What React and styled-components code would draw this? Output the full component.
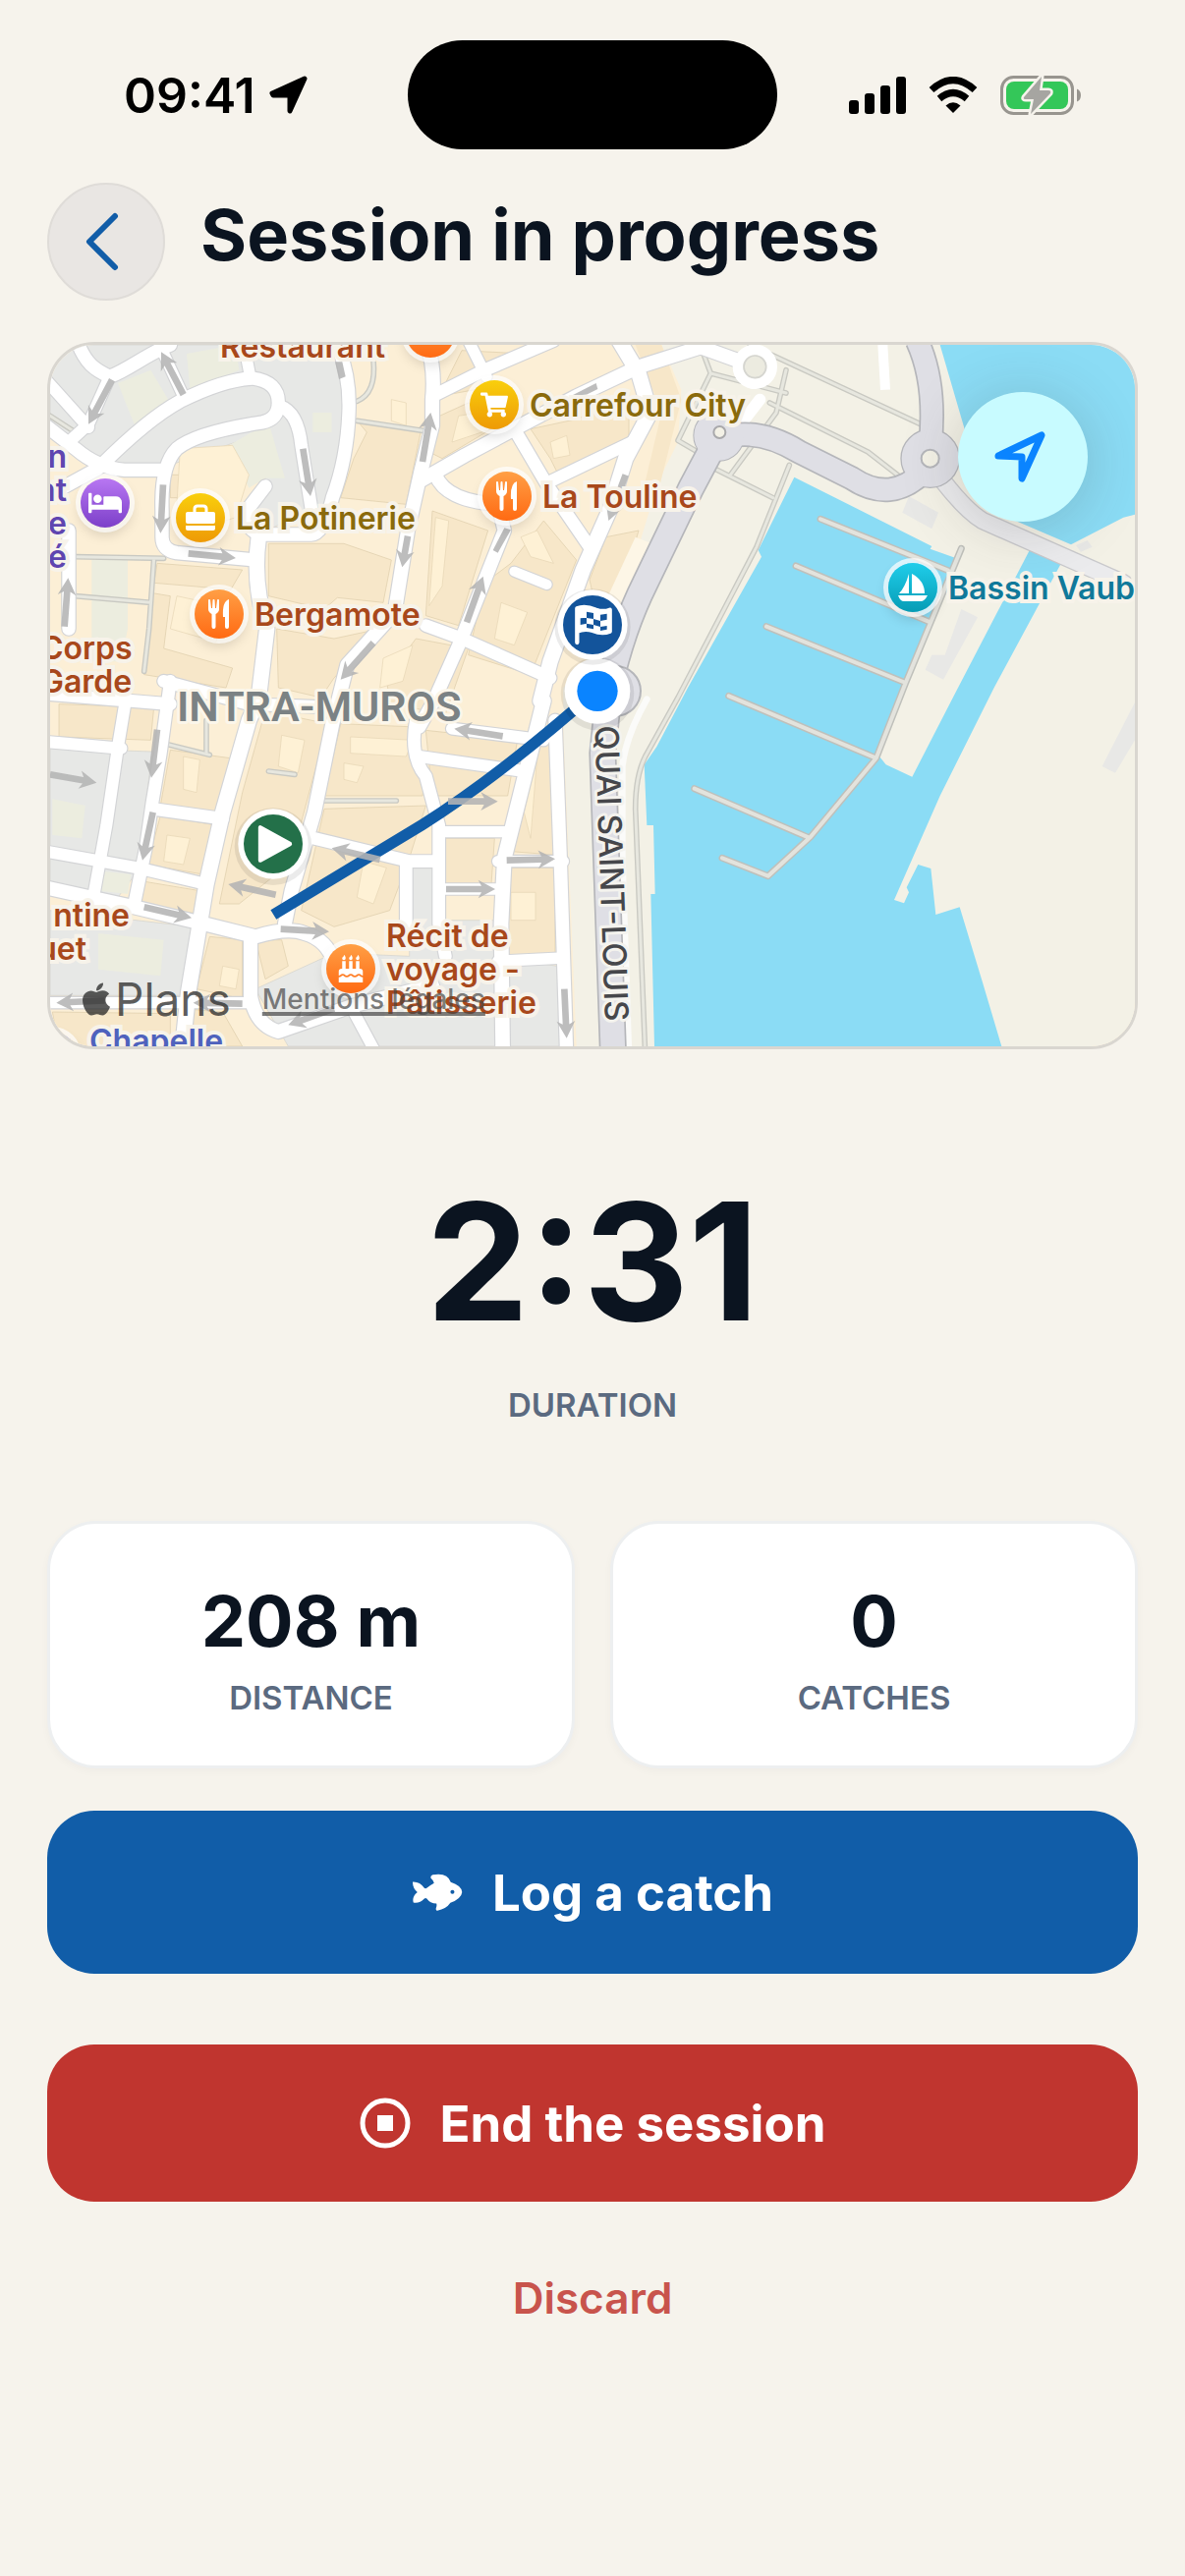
import React from "react";
import styled, { createGlobalStyle } from "styled-components";
import {
  FaApple,
  FaBed,
  FaBirthdayCake,
  FaShoppingCart,
  FaUtensils,
} from "react-icons/fa";

const COLORS = {
  page: "#f6f3ec",
  ink: "#0b1420",
  muted: "#5b6a80",
  blue: "#115da8",
  red: "#c0352f",
  water: "#8bdcf5",
};

// Size of the map surface, pins are placed in these units
const MAP_W = 1104;
const MAP_H = 714;

const GREY_BLOCKS = [
  "M33 33H925L945 180L925 420L860 530L690 600L640 560L690 440L600 330L400 400H180L33 300Z",
  "M33 1265L345 1275L300 1640L240 1720L33 1680Z",
  "M33 1760L470 1810L430 2020L33 2020Z",
  "M1130 1630L1215 1630L1225 1790L1390 1790L1400 1900L1580 1930L1600 2175H760L660 2000L900 1890L1130 1900Z",
];

const GREEN_BLOCKS = [
  "M240 150L340 110L400 210L300 300Z",
  "M580 340L700 270L750 440L690 440L640 470Z",
  "M450 60L600 33L610 110L460 170Z",
  "M160 690H270V900L250 1000H160Z",
  "M40 1420L140 1440L130 1540L40 1530Z",
  "M180 1830L380 1850L370 1960L180 1940Z",
  "M190 1640L280 1650L270 1710L185 1700Z",
  "M835 240H893V300H835Z",
];

const DARK_BLOCKS = [
  "M360 700L620 720L585 780L350 760Z",
  "M400 430H465L455 500H400Z",
  "M700 640L930 640L1075 690L1050 820L910 805L870 840L700 800Z",
  "M975 270L1165 295L1120 520L920 500L960 380L1000 300Z",
  "M340 790L400 800L380 960L590 1020L570 1080L320 1040Z",
  "M725 900L900 930L1040 900L900 1050L860 1110L730 1080Z",
  "M1060 1050L1150 930L1310 960L1240 1160L1070 1130Z",
  "M1290 50L1480 60L1380 120L1330 170L1220 190Z",
  "M1200 260L1310 210L1430 260L1230 380L1190 360Z",
  "M1500 290L1640 260L1800 190L1800 330L1580 420L1560 380Z",
  "M1200 540L1370 600L1280 890L1180 860Z",
  "M1440 700L1540 570L1640 690L1560 890L1500 1040L1310 980L1360 760Z",
  "M1730 620L1830 600L1780 770L1700 840L1680 750Z",
  "M400 1270L620 1300L550 1460L370 1440Z",
  "M370 1470L540 1500L500 1650L330 1620Z",
  "M310 1670L490 1700L480 1770L300 1740Z",
  "M690 1150L880 1190L800 1490L760 1620L610 1740L550 1740L620 1400Z",
  "M920 1190L1150 1200L1180 1340L1170 1410L870 1410Z",
  "M870 1450L1180 1440L1130 1600L1070 1760L900 1810L800 1760Z",
  "M520 1840L620 1850L620 2030L480 2000Z",
  "M660 1850L740 1850L760 1930L690 1970Z",
  "M1240 1540H1390L1380 1680H1240Z",
  "M1480 1260L1560 1240L1570 1590L1440 1580Z",
  "M1435 1630L1575 1630V1900L1420 1910Z",
  "M1180 1210L1460 1240L1430 1410L1200 1410Z",
  "M60 1130L350 1140L340 1240L60 1230Z",
  "M440 2060L560 2070L620 2175H440Z",
  "M40 2070L400 2075L400 2175H60Z",
];

const LIGHT_BLOCKS = [
  "M430 350L590 340L640 430L600 560L470 600L420 520Z",
  "M1075 200L1120 210L1120 280L1075 265Z",
  "M1050 990L1140 950L1110 1060L1040 1080Z",
  "M420 800L560 830L540 940L400 900Z",
  "M1280 250L1340 240L1380 290L1260 330Z",
  "M1560 330L1610 310L1620 370L1570 380Z",
  "M1410 820L1490 850L1450 950L1390 930Z",
  "M1470 620L1520 600L1570 700L1500 680Z",
  "M1210 560L1250 570L1230 770L1190 830Z",
  "M740 1225L810 1240L790 1340L730 1320Z",
  "M950 1230L1140 1240L1120 1290L950 1280Z",
  "M930 1310L990 1320L970 1370L930 1360Z",
  "M390 1530L460 1540L440 1620L380 1610Z",
  "M440 1290L490 1300L480 1400L440 1390Z",
  "M990 1610L1060 1630L1020 1740L970 1720Z",
  "M560 1930L610 1940L600 2000L550 1990Z",
  "M1440 1705H1515V1790H1440Z",
  "M1480 1460L1520 1290L1500 1540Z",
];

const ROADS = [
  ["M115 20C140 90 170 110 215 130C270 110 330 60 400 33", 40],
  ["M215 130L150 275L90 330", 36],
  ["M20 140L150 285", 36],
  ["M20 280L110 350Q180 410 260 415H380", 40],
  ["M33 490L180 410", 40],
  ["M375 50L440 190", 34],
  ["M190 400Q330 260 430 205Q560 140 650 135Q730 145 730 210Q730 260 680 270Q480 300 420 350Q370 400 375 540V620Q375 660 420 668L660 690", 40],
  ["M735 220Q790 240 800 340L835 560", 38],
  ["M625 33L645 135", 34],
  ["M910 33Q950 130 945 240Q940 380 895 500Q870 610 830 612H680Q620 600 640 530L690 465", 40],
  ["M670 620Q650 760 695 900L670 1110L640 1180L560 1460L510 1680L455 2010L435 2200", 46],
  ["M1180 20Q1210 100 1200 200V280L1165 420L1125 600L1085 850L940 1010L895 1190L840 1460L770 1700L750 1800", 42],
  ["M1200 190L1360 110L1570 20", 38],
  ["M1310 20L1365 130", 34],
  ["M1160 450L1300 370L1450 290L1640 190L1830 100L2020 40L2130 80", 42],
  ["M1770 20L1830 120L1865 240L1790 380L1740 540L1660 720L1610 860L1560 1000L1530 1120", 46],
  ["M1450 290L1550 460L1680 650", 38],
  ["M1560 450L1810 330", 36],
  ["M1210 430Q1240 510 1400 520L1420 600L1285 940L1205 1120L1160 1200", 40],
  ["M1180 890L1290 930L1560 1050", 38],
  ["M1450 725L1550 765", 30],
  ["M90 600V900", 40],
  ["M20 1245L250 1265", 36],
  ["M33 1100L400 1130", 38],
  ["M380 1060L640 1130L900 1140", 38],
  ["M265 1110L240 1260L205 1500L165 1720", 36],
  ["M400 1060L370 1280L345 1430L325 1570L290 1740", 38],
  ["M345 1450L560 1480", 38],
  ["M20 1580L300 1630L510 1680", 36],
  ["M20 1690L290 1750L500 1800L660 1840Q760 1810 810 1830Q880 1850 900 1920", 42],
  ["M645 1840V2020Q660 2110 730 2130L960 2050L1200 1990", 42],
  ["M20 2042H640", 34],
  ["M840 1540L1130 1610H1210", 38],
  ["M1120 1620V1860", 38],
  ["M960 2070L1030 2200", 34],
  ["M1160 1290L1480 1335", 36],
  ["M1150 1180Q1130 1290 1180 1350L1220 1500V1800L1240 1900", 38],
  ["M1540 1120L1500 1280L1420 1600L1410 1800L1415 2200", 44],
  ["M1260 1205L1540 1240", 36],
  ["M1220 1520H1440", 34],
  ["M1400 1610H1600", 34],
  ["M1220 1695H1400", 34],
  ["M1400 1915L1600 1905", 34],
  ["M1575 1180L1590 1580L1610 2200", 40],
];

const FOOTPATHS = [
  "M33 250L110 300",
  "M110 680L380 685M350 685L335 900L320 1030M110 800L340 820",
  "M970 265L1170 295M970 205Q1030 180 1020 80",
  "M380 1250L520 1285M510 1180V1280M700 1335L780 1345",
  "M870 1425H1090",
  "M2020 40L2050 120L1950 325L2010 360M2050 120L2280 180M2170 33L2690 275M2280 110L2250 240L2110 430M2060 410L2240 500M2230 210L2530 360L2620 430",
  "M2290 400L2190 650L1950 1110L1850 1290Q1820 1350 1820 1450L1850 2200",
];

const PIERS =
  "M2385 565L2775 722M2310 708L2720 880M2220 893L2645 1065M2105 1105L2555 1295M2000 1388L2350 1538M2085 1600L2225 1655L2355 1535L2555 1295L2645 1065L2815 655";

const ARROWS = [
  [222, 140, 150, 275],
  [440, 185, 372, 55],
  [378, 460, 370, 608],
  [455, 670, 600, 684],
  [805, 350, 828, 495],
  [77, 893, 88, 745],
  [1125, 617, 1108, 712],
  [1020, 943, 920, 1055],
  [1170, 390, 1195, 240],
  [1305, 880, 1355, 740],
  [1790, 430, 1738, 570],
  [360, 1208, 342, 1355],
  [33, 1345, 175, 1370],
  [347, 1460, 315, 1607],
  [722, 1712, 577, 1680],
  [320, 1750, 465, 1783],
  [737, 1817, 885, 1825],
  [1040, 1605, 893, 1570],
  [620, 2045, 470, 2042],
  [200, 2035, 52, 2042],
  [900, 2060, 760, 2110],
  [1415, 1228, 1267, 1205],
  [1248, 1427, 1400, 1427],
  [1427, 1607, 1575, 1603],
  [1242, 1695, 1392, 1695],
  [1603, 2000, 1610, 2150],
];

const SuitcaseIcon = () => (
  <svg viewBox="0 0 32 28" width="32" height="28" aria-hidden="true">
    <path d="M10 8V5Q10 2 13 2H19Q22 2 22 5V8" fill="none" stroke="#fff" strokeWidth="3" />
    <rect x="1" y="8" width="30" height="12" rx="2" fill="#fff" />
    <path d="M1 22H31V25Q31 27 29 27H3Q1 27 1 25Z" fill="#fff" />
  </svg>
);

const SailboatIcon = () => (
  <svg viewBox="0 0 30 30" width="30" height="30" aria-hidden="true">
    <path d="M11 1V21H1Q7 15 11 1Z" fill="#fff" />
    <path d="M14 1Q27 8 27 21H14Z" fill="#fff" />
    <path d="M0 23H30Q27 29 23 29H6Q2 29 0 23Z" fill="#fff" />
  </svg>
);

const CutleryIcon = () => (
  <svg viewBox="0 0 24 32" width="24" height="32" aria-hidden="true">
    <path
      d="M1 2Q1 1 2 1T3 2L4 10H5L5.500 2Q5.500 1 6.500 1T7.500 2L8 10H9L10 2Q10 1 11 1T12 2V11Q12 14 8.500 16V29Q8.500 31 6.500 31T4.500 29V16Q1 14 1 11Z"
      fill="#fff"
    />
    <path d="M22 1V29Q22 31 20 31T18 29V19H16Q15 3 22 1Z" fill="#fff" />
  </svg>
);

const POIS = [
  { x: 387, y: -12, tone: "orange" },
  { x: 56, y: 161, tone: "purple", icon: <FaBed size={34} /> },
  { x: 153, y: 176, tone: "yellow", icon: <SuitcaseIcon />, lines: ["La Potinerie"] },
  { x: 172, y: 274, tone: "orange", icon: <CutleryIcon />, lines: ["Bergamote"] },
  { x: 452, y: 61, tone: "yellow", icon: <FaShoppingCart />, lines: ["Carrefour City"] },
  { x: 465, y: 154, tone: "orange", icon: <CutleryIcon />, lines: ["La Touline"] },
  { x: 878, y: 247, tone: "teal", icon: <SailboatIcon />, lines: ["Bassin Vauban"] },
  {
    x: 306,
    y: 635,
    tone: "orange",
    icon: <FaBirthdayCake />,
    lines: ["Récit de", "voyage -", "Pâtisserie"],
  },
  { x: 2, y: 724, tone: "indigo" },
];

const LOOSE_LABELS = [
  { x: 173, y: -17, color: "#a8481b", lines: ["Restaurant"] },
  { x: 17, y: 95, end: true, color: "#5f45b0", lines: ["n", "nt", "e", "é"] },
  { x: -10, y: 290, color: "#a8481b", lines: ["Corps", "Garde"] },
  { x: 81, y: 562, end: true, color: "#a8481b", lines: ["ntine"] },
  { x: 37, y: 596, end: true, color: "#a8481b", lines: ["uet"] },
  { x: 40, y: 690, color: "#4f62bd", lines: ["Chapelle"] },
];

const TONES = {
  orange: { fill: "linear-gradient(#ff9f45, #ff6a13)", text: "#a8481b" },
  yellow: { fill: "linear-gradient(#f9cf0c, #ee9a06)", text: "#8a6a0c" },
  purple: { fill: "linear-gradient(#b877f2, #7c3fc9)", text: "#5f45b0" },
  teal: { fill: "linear-gradient(#1fcdea, #069cb5)", text: "#10799a" },
  indigo: { fill: "#5a6fe0", text: "#4f62bd" },
};

const place = (x, y) => ({
  left: `${(x / MAP_W) * 100}%`,
  top: `${(y / MAP_H) * 100}%`,
});

const Arrow = ({ points: [x1, y1, x2, y2] }) => {
  const length = Math.hypot(x2 - x1, y2 - y1);
  const angle = (Math.atan2(y2 - y1, x2 - x1) * 180) / Math.PI;
  return (
    <path
      transform={`translate(${x1} ${y1}) rotate(${angle})`}
      d={`M0 -10H${length - 42}L${length - 52} -28L${length} 0L${length - 52} 28L${length - 42} 10H0Z`}
    />
  );
};

const MapDrawing = () => (
  <MapSvg viewBox="33 33 3312 2142" role="img" aria-label="Route through Intra-Muros">
    <rect x="33" y="33" width="3312" height="2142" fill="#fcefd6" />
    <g fill="#e7e8e6" stroke="#d2d2cc" strokeWidth="2">
      {GREY_BLOCKS.map((d) => (
        <path key={d} d={d} />
      ))}
    </g>
    <g fill="#eceddf">
      {GREEN_BLOCKS.map((d) => (
        <path key={d} d={d} />
      ))}
    </g>
    <g fill="#f7e7c9" stroke="#dccba9" strokeWidth="2">
      {DARK_BLOCKS.map((d) => (
        <path key={d} d={d} />
      ))}
    </g>
    <g fill="#fef1d5" stroke="#e6d5b3" strokeWidth="2">
      {LIGHT_BLOCKS.map((d) => (
        <path key={d} d={d} />
      ))}
    </g>

    {/* east bank */}
    <path
      d="M1900 33L1960 170L1950 330L1890 450L1790 780L1700 960L1600 1080V1200L1640 2175H3345V33Z"
      fill="#f3f1e6"
    />
    <path d="M1820 33H1900L1960 200L1890 480L1850 450L1900 240Z" fill="#f7e7c9" />
    <path d="M1870 640L1820 620L1690 900L1740 890Z" fill="#fdf6e6" />
    <g fill={COLORS.water}>
      <path d="M2750 33L2825 290L2850 480L2980 570L3150 643L3310 560L3345 551V33Z" />
      <path d="M2305 437L2725 648L2720 656L2800 685L2780 740L2715 880L2640 1100L2565 1290L2585 1315L2665 1352L2805 1080L3025 657L3120 700L2915 1080L2750 1410L2610 1728L2640 1738L2655 1705L2648 1690L2683 1620L2722 1632L2737 1773L2810 1750L2880 1980L2938 2175H1878L1867 1710H1880L1875 1500H1855L1847 1315L1885 1260L1980 1080L2205 680L2195 660Z" />
    </g>
    <g fill="#e8e8e6">
      <path d="M2655 495L2745 545L2725 595L2635 545Z" />
      <path d="M2815 840L2865 865L2760 1055L2705 1025L2725 980L2765 980Z" />
      <path d="M3245 1320L3345 1125V1240L3285 1340Z" />
      <path d="M3200 630L3215 650L3180 665L3165 645Z" />
    </g>

    <g fill="none" strokeLinecap="round" strokeLinejoin="round">
      {FOOTPATHS.map((d) => (
        <path key={d} d={d} stroke="#c9c9c2" strokeWidth="17" />
      ))}
      {FOOTPATHS.map((d) => (
        <path key={d} d={d} stroke="#e7e7df" strokeWidth="9" />
      ))}
      <path d={PIERS} stroke="#bfc0bb" strokeWidth="21" />
      <path d={PIERS} stroke="#e3e3dd" strokeWidth="12" />
      {ROADS.map(([d, w]) => (
        <path key={d} d={d} stroke="#d3d4d6" strokeWidth={w + 7} />
      ))}
      {ROADS.map(([d, w]) => (
        <path key={d} d={d} stroke="#fff" strokeWidth={w} />
      ))}
      <path d="M1855 1115Q1790 1230 1780 1320V1600L1800 2200" stroke="#fbfbf9" strokeWidth="20" />
      <path d="M2575 33L2583 170" stroke="#fff" strokeWidth="30" strokeLinecap="butt" />
      <path d="M2200 200L2130 290" stroke="#fff" strokeWidth="36" />
      <path d="M2760 450Q2830 540 2880 570L3310 760" stroke="#c9c9cc" strokeWidth="56" />
      <path d="M2760 450Q2830 540 2880 570L3310 760" stroke="#ebebed" strokeWidth="48" />
    </g>
    <circle cx="2185" cy="100" r="52" fill="#f3f1e6" stroke="#fff" strokeWidth="32" />
    <circle cx="2185" cy="100" r="34" fill="#ecebe0" stroke="#d5d5d0" strokeWidth="5" />

    {/* quay road, drawn casing first */}
    <g fill="none" stroke="#b5b6ba">
      <path
        d="M2075 310L1990 470L1850 760Q1780 900 1740 1080L1720 1280L1752 2200"
        strokeWidth="84"
      />
      <path d="M2075 320Q2190 280 2320 360L2480 440Q2600 520 2700 420M2680 20Q2740 150 2720 340" strokeWidth="76" />
      <circle cx="2075" cy="310" r="58" strokeWidth="42" />
      <circle cx="2720" cy="380" r="66" strokeWidth="50" />
    </g>
    <g fill="none" stroke="#dfdfe5">
      <path
        d="M2075 310L1990 470L1850 760Q1780 900 1740 1080L1720 1280L1752 2200"
        strokeWidth="74"
      />
      <path d="M2075 320Q2190 280 2320 360L2480 440Q2600 520 2700 420M2680 20Q2740 150 2720 340" strokeWidth="66" />
      <circle cx="2075" cy="310" r="42" strokeWidth="68" />
      <circle cx="2720" cy="380" r="54" strokeWidth="66" />
    </g>
    <circle cx="1760" cy="1090" r="76" fill="#dfdfe5" stroke="#b5b6ba" strokeWidth="6" />
    <circle cx="2077" cy="300" r="18" fill="#f3f1e6" stroke="#a9a9ab" strokeWidth="6" />
    <circle cx="2720" cy="380" r="27" fill="#f3f1e6" stroke="#b5b6ba" strokeWidth="6" />

    <path
      d="M715 1773L1170 1498Q1380 1365 1630 1150L1700 1090"
      fill="none"
      stroke={COLORS.blue}
      strokeWidth="34"
    />
    <g fill="#b4b4b4" fillOpacity="0.88">
      {ARROWS.map((points) => (
        <Arrow key={points.join()} points={points} />
      ))}
      <path d="M1420 592L1440 598L1400 668L1385 660Z" />
      <path d="M1700 150L1705 168L1640 200L1625 188Z" />
      <path d="M903 85H925L935 130L915 138Z" />
    </g>

    <DistrictName x="420" y="1183">
      INTRA-MUROS
    </DistrictName>
    <StreetName transform="translate(1712 1648) rotate(88)" textAnchor="middle">
      QUAI SAINT-LOUIS
    </StreetName>

    <circle cx="714" cy="1565" r="118" fill="#000" fillOpacity="0.08" />
    <circle cx="714" cy="1557" r="107" fill="#fff" />
    <circle cx="714" cy="1557" r="90" fill="#237049" />
    <path
      d="M675 1507V1607L765 1557Z"
      fill="#fff"
      stroke="#fff"
      strokeWidth="13"
      strokeLinejoin="round"
    />

    <circle cx="1704" cy="1098" r="112" fill="#000" fillOpacity="0.08" />
    <circle cx="1704" cy="1090" r="100" fill="#fff" />
    <circle cx="1704" cy="1090" r="62" fill="#0a84ff" />

    <circle cx="1689" cy="894" r="116" fill="#000" fillOpacity="0.08" />
    <circle cx="1689" cy="888" r="107" fill="#fff" />
    <circle cx="1689" cy="888" r="90" fill="#13549b" />
    <path
      d="M1642 942V838Q1665 828 1700 842Q1722 850 1742 842V908Q1718 918 1690 906Q1665 898 1642 908"
      fill="#fff"
      stroke="#fff"
      strokeWidth="13"
      strokeLinecap="round"
      strokeLinejoin="round"
    />
    <path
      d="M1671 848L1692 852V870L1671 867ZM1713 857L1733 854V872L1713 876ZM1692 870L1713 876V894L1692 888ZM1652 868L1671 866V884L1652 888ZM1671 884L1692 888V901L1671 897ZM1713 894L1733 891V902L1713 906Z"
      fill="#13549b"
    />
  </MapSvg>
);

const StatusIcons = () => (
  <>
    <svg viewBox="0 0 58 38" width="58" height="38" aria-label="Signal">
      <rect x="0" y="24" width="10" height="14" rx="3" />
      <rect x="16" y="17" width="10" height="21" rx="3" />
      <rect x="32" y="9" width="10" height="29" rx="3" />
      <rect x="48" y="0" width="10" height="38" rx="3" />
    </svg>
    <svg viewBox="0 0 50 37" width="50" height="37" aria-label="Wi-Fi">
      <g fill="none" stroke="#000" strokeWidth="7">
        <path d="M3 13.500Q25 -6.500 47 13.500" />
        <path d="M11 22.500Q25 10.500 39 22.500" />
      </g>
      <path d="M17.500 29.500Q25 23 32.500 29.500L25 37Z" />
    </svg>
    <svg viewBox="0 0 82 40" width="82" height="40" aria-label="Charging">
      <rect x="1.500" y="1.500" width="72" height="37" rx="12" fill="none" stroke="#98958f" strokeWidth="3" />
      <rect x="6" y="6" width="63" height="28" rx="8" fill="#34c759" />
      <path d="M78 13.500Q82 15 82 20T78 26.500Z" fill="#98958f" />
      <path
        d="M42 1L24 22Q23 24 26 24H34L31 39L51 18Q52 15 49 15H40Z"
        fill="#a6a5a1"
        stroke={COLORS.page}
        strokeWidth="5"
        paintOrder="stroke"
        strokeLinejoin="round"
      />
    </svg>
  </>
);

const App = () => {
  return (
    <Screen>
      <GlobalStyle />
      <StatusBar>
        <Clock>
          <time>09:41</time>
          <svg viewBox="0 0 40 40" width="40" height="40" aria-hidden="true">
            <path
              d="M3 18L36 3L21 36V20H4Z"
              stroke="#000"
              strokeWidth="5"
              strokeLinejoin="round"
            />
          </svg>
        </Clock>
        <Island />
        <Indicators>
          <StatusIcons />
        </Indicators>
      </StatusBar>

      <Main>
        <Header>
          <BackButton type="button" aria-label="Back">
            <svg viewBox="0 0 36 60" width="36" height="60" aria-hidden="true">
              <path d="M31 4L5 30L31 56" />
            </svg>
          </BackButton>
          <Title>Session in progress</Title>
        </Header>

        <MapCard>
          <MapDrawing />
          {LOOSE_LABELS.map(({ x, y, end, color, lines }) => (
            <LooseLabel key={lines.join()} $color={color} $end={end} style={place(x, y)}>
              {lines.map((line) => (
                <span key={line}>{line}</span>
              ))}
            </LooseLabel>
          ))}
          {POIS.map(({ x, y, tone, icon, lines }) => (
            <Poi key={`${x}-${y}`} style={place(x, y)}>
              <PoiDot $tone={tone}>{icon}</PoiDot>
              {lines && (
                <MapLabel $color={TONES[tone].text}>
                  {lines.map((line) => (
                    <span key={line}>{line}</span>
                  ))}
                </MapLabel>
              )}
            </Poi>
          ))}
          <Credits>
            <Brand>
              <FaApple size={38} />
              Plans
            </Brand>
            <LegalLink href="#legal">Mentions légales</LegalLink>
          </Credits>
          <LocateButton type="button" aria-label="Centre on my position">
            <svg viewBox="0 0 52 52" width="52" height="52" aria-hidden="true">
              <path d="M4 25L48 4L28 48V26Z" />
            </svg>
          </LocateButton>
        </MapCard>

        <Timer>
          <TimerValue>2:31</TimerValue>
          <Caption>DURATION</Caption>
        </Timer>

        <Stats>
          <StatCard>
            <StatValue>208 m</StatValue>
            <Caption>DISTANCE</Caption>
          </StatCard>
          <StatCard>
            <StatValue>0</StatValue>
            <Caption>CATCHES</Caption>
          </StatCard>
        </Stats>

        <Actions>
          <ActionButton type="button" $height={166} $color={COLORS.blue}>
            <svg viewBox="242 214 151 112" width="52" height="38" aria-hidden="true">
              <path
                fill="#fff"
                d="M244 239Q266 238 278 257Q282 261 287 257Q297 249 308 243Q308 236 298 227Q297 220 304 218Q348 210 358 240Q390 250 392 270Q390 289 357 302Q344 321 318 325Q312 325 314 317Q317 310 315 304Q296 303 286 289Q282 286 278 290Q265 304 246 301Q241 284 258 270Q243 257 244 239Z"
              />
              <circle cx="363" cy="269" r="6" fill={COLORS.blue} />
            </svg>
            Log a catch
          </ActionButton>
          <ActionButton type="button" $height={160} $color={COLORS.red}>
            <svg viewBox="0 0 52 52" width="52" height="52" aria-hidden="true">
              <circle cx="26" cy="26" r="23" fill="none" stroke="#fff" strokeWidth="5" />
              <rect x="18" y="18" width="16" height="16" fill="#fff" />
            </svg>
            End the session
          </ActionButton>
          <DiscardButton type="button">Discard</DiscardButton>
        </Actions>
      </Main>
    </Screen>
  );
};

const GlobalStyle = createGlobalStyle`
  * {
    box-sizing: border-box;
  }

  body {
    margin: 0;
    background: ${COLORS.page};
    color: ${COLORS.ink};
    font-family: Inter, "Liberation Sans", sans-serif;
  }

  button {
    padding: 0;
    border: 0;
    font-family: inherit;
    cursor: pointer;
  }

  svg {
    flex-shrink: 0;
  }
`;

const Screen = styled.div`
  min-height: 100vh;
  background: ${COLORS.page};
`;

const StatusBar = styled.div`
  display: grid;
  grid-template-columns: 1fr 376px 1fr;
  align-items: center;
  padding-top: 41px;
`;

const Clock = styled.div`
  display: flex;
  align-items: center;
  gap: 14px;
  padding-left: 126px;
  font-size: 50px;
  font-weight: 600;
  line-height: 60px;
  color: #000;
`;

const Island = styled.div`
  height: 111px;
  border-radius: 56px;
  background: #000;
`;

const Indicators = styled.div`
  display: flex;
  align-items: center;
  justify-content: flex-end;
  gap: 23px;
  padding-right: 106px;
`;

const Main = styled.main`
  display: flex;
  flex-direction: column;
  padding: 34px 48px 48px;
`;

const Header = styled.header`
  display: flex;
  align-items: center;
  gap: 36px;
  margin-bottom: 42px;
`;

const BackButton = styled.button`
  display: flex;
  align-items: center;
  justify-content: center;
  flex-shrink: 0;
  width: 120px;
  height: 120px;
  padding-right: 8px;
  border: 2px solid #dfdcd8;
  border-radius: 50%;
  background: #e9e6e3;

  path {
    fill: none;
    stroke: ${COLORS.blue};
    stroke-width: 6;
    stroke-linecap: round;
    stroke-linejoin: round;
  }
`;

const Title = styled.h1`
  margin: 0;
  padding-bottom: 14px;
  font-size: 72px;
  font-weight: 700;
  line-height: 88px;
`;

const MapCard = styled.section`
  position: relative;
  overflow: hidden;
  aspect-ratio: 1110 / 720;
  border: 3px solid #d9d6d0;
  border-radius: 48px;
`;

const MapSvg = styled.svg`
  display: block;
  width: 100%;
  height: 100%;
`;

const DistrictName = styled.text`
  fill: #7b8284;
  stroke: #fbf6ea;
  stroke-width: 18px;
  stroke-linejoin: round;
  paint-order: stroke;
  font-family: Roboto, sans-serif;
  font-size: 129px;
  font-weight: 600;
`;

const StreetName = styled.text`
  fill: #46474b;
  stroke: #f4f3ee;
  stroke-width: 18px;
  stroke-linejoin: round;
  paint-order: stroke;
  font-family: Inter, sans-serif;
  font-size: 99px;
  font-weight: 500;
`;

const MapLabel = styled.div`
  display: flex;
  flex-direction: column;
  padding-top: 2px;
  color: ${({ $color }) => $color};
  font-size: 32px;
  font-weight: 600;
  line-height: 34px;
  white-space: nowrap;
  -webkit-text-stroke: 8px #f7f3ea;
  paint-order: stroke fill;
`;

const LooseLabel = styled(MapLabel)`
  position: absolute;
  align-items: ${({ $end }) => ($end ? "flex-end" : "flex-start")};
  transform: ${({ $end }) => ($end ? "translateX(-100%)" : "none")};
`;

const Poi = styled.div`
  position: absolute;
  display: flex;
  align-items: center;
  gap: 11px;
  transform: translate(-25px, -50%);
`;

const PoiDot = styled.div`
  display: flex;
  align-items: center;
  justify-content: center;
  flex-shrink: 0;
  width: 50px;
  height: 50px;
  border-radius: 50%;
  background: ${({ $tone }) => TONES[$tone].fill};
  box-shadow: 0 0 0 5px rgba(255, 255, 255, 0.7), 0 6px 14px rgba(0, 0, 0, 0.18);
  color: #fff;
  font-size: 28px;
`;

const Credits = styled.div`
  position: absolute;
  left: 28px;
  bottom: 18px;
  display: flex;
  align-items: center;
  gap: 32px;
`;

const Brand = styled.span`
  display: flex;
  align-items: center;
  font-size: 46px;
  line-height: 60px;
  color: rgba(40, 40, 40, 0.76);
`;

const LegalLink = styled.a`
  color: rgba(70, 70, 70, 0.7);
  font-size: 28px;
  font-weight: 500;
  line-height: 34px;
  text-decoration: underline;
  text-decoration-thickness: 4px;
  text-underline-offset: 3px;
  text-decoration-skip-ink: none;
`;

const LocateButton = styled.button`
  position: absolute;
  top: 48px;
  right: 48px;
  display: flex;
  align-items: center;
  justify-content: center;
  width: 132px;
  height: 132px;
  padding-right: 6px;
  border-radius: 50%;
  background: #c8fbff;
  box-shadow: 0 6px 60px rgba(60, 60, 60, 0.22);

  path {
    fill: none;
    stroke: #0a84ff;
    stroke-width: 7;
    stroke-linejoin: round;
  }
`;

const Timer = styled.section`
  display: flex;
  flex-direction: column;
  align-items: center;
  gap: 42px;
  padding: 132px 0 98px;
`;

const TimerValue = styled.div`
  font-size: 166px;
  font-weight: 700;
  line-height: 168px;
`;

const Caption = styled.div`
  color: ${COLORS.muted};
  font-size: 33px;
  font-weight: 600;
  line-height: 40px;
`;

const Stats = styled.section`
  display: grid;
  grid-template-columns: 1fr 1fr;
  gap: 36px;
  margin-bottom: 43px;
`;

const StatCard = styled.div`
  display: flex;
  flex-direction: column;
  align-items: center;
  gap: 14px;
  padding: 55px 24px 49px;
  border: 3px solid #edeff0;
  border-radius: 50px;
  background: #fff;
  box-shadow: 0 3px 9px rgba(20, 40, 70, 0.03);
`;

const StatValue = styled.div`
  font-size: 72px;
  font-weight: 700;
  line-height: 88px;
`;

const Actions = styled.div`
  display: flex;
  flex-direction: column;
  align-items: center;
`;

const ActionButton = styled.button`
  display: flex;
  align-items: center;
  justify-content: center;
  gap: 30px;
  width: 100%;
  height: ${({ $height }) => $height}px;
  border-radius: 48px;
  background: ${({ $color }) => $color};
  color: #fff;
  font-size: 51px;
  font-weight: 700;

  & + & {
    margin-top: 72px;
  }
`;

const DiscardButton = styled.button`
  margin-top: 68px;
  background: none;
  color: #c8544c;
  font-size: 44px;
  font-weight: 600;
  line-height: 60px;
`;

export default App;
